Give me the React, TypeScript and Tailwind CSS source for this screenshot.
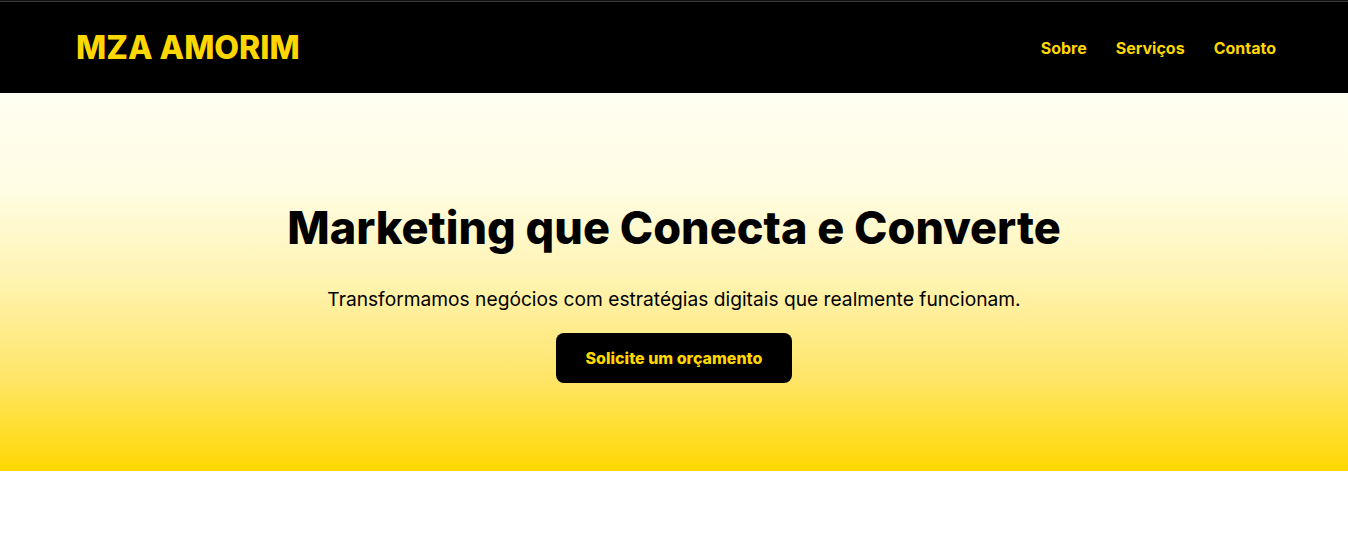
import React from "react";

export default function App() {
  return (
    <div className="min-h-[539px] bg-white font-['Inter','Liberation_Sans',sans-serif]">
      <div className="h-px bg-[#111]" />
      <div className="h-px bg-[#3a3a3a]" />
      <header className="flex h-[91px] items-center justify-between bg-black pl-[76px] pr-[72px]">
        <div className="text-[32px] font-extrabold leading-none text-[#ffd700]">MZA AMORIM</div>
        <nav className="flex gap-[29px] text-[16px] font-bold text-[#ffd700]">
          <a>Sobre</a>
          <a>Serviços</a>
          <a>Contato</a>
        </nav>
      </header>
      <section className="flex h-[378px] flex-col items-center bg-[linear-gradient(to_bottom,#fffff2_0%,#fffde4_25%,#fff3b0_50%,#ffe566_76%,#ffd700_100%)] pt-[108px] text-center">
        <h1 className="text-[45px] font-extrabold leading-[1.2] text-black">Marketing que Conecta e Converte</h1>
        <p className="mt-[31px] text-[19.2px] leading-[1.4] text-black">
          Transformamos negócios com estratégias digitais que realmente funcionam.
        </p>
        <button className="mt-[20px] h-[50px] rounded-[8px] bg-black px-[30px] text-[16px] font-extrabold text-[#ffd700]">
          Solicite um orçamento
        </button>
      </section>
    </div>
  );
}
